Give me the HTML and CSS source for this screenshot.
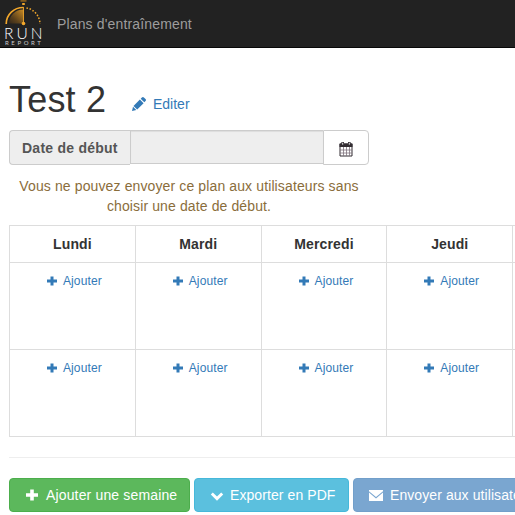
FILE: index.html
```
<!DOCTYPE html>
<html lang="fr">
<head>
<meta charset="utf-8">
<title>Plans d'entraînement</title>
<link rel="stylesheet" href="styles.css">
</head>
<body>
<svg class="defs" width="0" height="0">
  <symbol id="plus" viewBox="0 0 10 10"><path d="M3.5 0.5h3v3h3.5v3H6.5v3h-3v-3H0v-3h3.5z"/></symbol>
</svg>
<nav class="navbar">
  <a class="brand">
    <svg class="watch" width="38" height="26" viewBox="0 0 38 26">
      <defs><linearGradient id="gold" x1="0" y1="1" x2="1" y2="0"><stop offset="0" stop-color="#33271a"/><stop offset=".35" stop-color="#5b411c"/><stop offset="1" stop-color="#c88a24"/></linearGradient></defs>
      <path d="M15.500 0h6v1.800h-6z" fill="#80591d"/><path d="M17.200 3h2.600v2h-2.600z" fill="#f2a72b"/>
      <path d="M18.500 9.500A14 14 0 0 0 4 23.500H18.500z" fill="url(#gold)"/>
      <path d="M18.500 7.500A17 16.500 0 0 0 1.200 24" fill="none" stroke="#f2a72b" stroke-width="1.700"/>
      <path d="M21.500 8A16 16.500 0 0 1 35 24" fill="none" stroke="#f2a72b" stroke-width="1.500" stroke-dasharray="1.500 1.700"/>
      <path d="M18.500 7v17" stroke="#e09b2a" stroke-width="1"/>
      <circle cx="18.500" cy="23.500" r="1.800" fill="#f2a72b"/>
    </svg>
    <span class="run">RUN</span>
    <span class="report">REPORT</span>
  </a>
  <a class="nav-link">Plans d'entraînement</a>
</nav>
<main class="page">
  <div class="title">
    <h1>Test 2</h1>
    <a class="edit"><svg width="14" height="14" viewBox="0 0 14 14" fill="currentColor"><path d="M0 14l1-4.300 3.300 3.300zM1.500 8.900l6.400-6.400 3.700 3.700-6.400 6.400zM8.700 1.700l1.200-1.200q1-1 2 0l1.600 1.600q1 1 0 2l-1.200 1.200z"/></svg>Editer</a>
  </div>
  <div class="date-group">
    <label class="addon">Date de début</label>
    <div class="field"></div>
    <button class="calendar" aria-label="Calendrier"><svg width="14" height="15" viewBox="0 0 14 15"><path d="M1 2h12v12H1z" fill="#fff" stroke="#332d32"/><path d="M.5 1.500h13v3.500H.5z" fill="#332d32"/><path d="M4.500 5v9M7.500 5v9M10.500 5v9M1 8h12M1 11h12" stroke="#80757f" stroke-width=".8"/><path d="M3.700 0v3M10.300 0v3" stroke="#332d32" stroke-width="2.600"/><path d="M3.700 .7v2M10.300 .7v2" stroke="#fff" stroke-width=".9"/></svg></button>
  </div>
  <p class="warning">Vous ne pouvez envoyer ce plan aux utilisateurs sans choisir une date de début.</p>
  <table class="plan">
    <thead><tr><th>Lundi</th><th>Mardi</th><th>Mercredi</th><th>Jeudi</th><th></th></tr></thead>
    <tbody>
      <tr>
        <td><a class="add"><svg><use href="#plus"/></svg>Ajouter</a></td>
        <td><a class="add"><svg><use href="#plus"/></svg>Ajouter</a></td>
        <td><a class="add"><svg><use href="#plus"/></svg>Ajouter</a></td>
        <td><a class="add"><svg><use href="#plus"/></svg>Ajouter</a></td>
        <td></td>
      </tr>
      <tr>
        <td><a class="add"><svg><use href="#plus"/></svg>Ajouter</a></td>
        <td><a class="add"><svg><use href="#plus"/></svg>Ajouter</a></td>
        <td><a class="add"><svg><use href="#plus"/></svg>Ajouter</a></td>
        <td><a class="add"><svg><use href="#plus"/></svg>Ajouter</a></td>
        <td></td>
      </tr>
    </tbody>
  </table>
  <hr>
  <div class="actions">
    <a class="btn success"><svg width="12" height="12" viewBox="0 0 10 10"><use href="#plus" width="10" height="10"/></svg>Ajouter une semaine</a>
    <a class="btn info"><svg width="14" height="14" viewBox="0 0 14 14"><path d="M.8 6.500l2-2 4.200 4 4.200-4 2 2L7 12.700z"/></svg>Exporter en PDF</a>
    <a class="btn primary"><svg width="14" height="14" viewBox="0 0 14 14"><path d="M0 2h14v1.200L7 9 0 3.200zM0 4.600l7 5.900 7-5.900V13H0z"/></svg>Envoyer aux utilisateurs</a>
  </div>
</main>
</body>
</html>
```
FILE: styles.css
```
* { box-sizing: border-box; }
html { overflow: hidden; }
body {
  margin: 0;
  height: 515px;
  overflow: hidden;
  background: #fff;
  color: #333;
  font: 14px/20px "Liberation Sans", Arial, sans-serif;
}
.defs { position: absolute; }
.navbar {
  display: flex;
  height: 48px;
  background: #222;
  border-bottom: 1px solid #080808;
}
.brand {
  display: flex;
  flex-direction: column;
  width: 57px;
  padding-left: 5px;
  color: #fff;
}
.watch { display: block; flex: none; }
.run {
  height: 14px;
  margin-left: -1px;
  font: 300 15.5px/14px Lato, sans-serif;
  letter-spacing: 3px;
}
.report {
  height: 6px;
  font: 6px/6px Lato, sans-serif;
  letter-spacing: 2.6px;
  color: #ccc;
}
.nav-link { padding-top: 14px; color: #9d9d9d; letter-spacing: .15px; }
.page { padding: 30px 0 0 9px; }
.title { display: flex; height: 52px; }
h1 {
  width: 123px;
  margin: 1px 0 0;
  font-size: 36px;
  line-height: 42px;
  font-weight: 500;
  letter-spacing: .2px;
}
.edit {
  display: flex;
  align-items: center;
  height: 20px;
  margin-top: 16px;
  gap: 7px;
  color: #337ab7;
}
.date-group { display: flex; align-items: flex-start; width: 360px; height: 35px; }
.addon {
  width: 121px;
  height: 35px;
  padding: 7px 0 0 12px;
  border: 1px solid #ccc;
  border-right: 0;
  border-radius: 4px 0 0 4px;
  background: #eee;
  color: #555;
  font-weight: bold;
  letter-spacing: .24px;
}
.field {
  flex: 1;
  height: 34px;
  border: 1px solid #ccc;
  border-right: 0;
  background: #eee;
  box-shadow: inset 0 1px 1px rgba(0, 0, 0, .075);
}
.calendar {
  display: flex;
  align-items: center;
  justify-content: center;
  width: 46px;
  height: 35px;
  padding: 3px 0 0;
  border: 1px solid #ccc;
  border-radius: 0 4px 4px 0;
  background: #fff;
}
.warning {
  width: 360px;
  margin: 11px 0 9px;
  color: #8a6d3b;
  text-align: center;
  letter-spacing: .12px;
}
.plan {
  width: 630px;
  table-layout: fixed;
  border-collapse: collapse;
}
.plan th, .plan td { padding: 8px; border: 1px solid #ddd; text-align: center; }
.plan th { height: 37px; letter-spacing: .12px; }
.plan td { height: 87px; vertical-align: top; }
.add {
  display: flex;
  align-items: center;
  justify-content: center;
  gap: 6px;
  height: 20px;
  padding-left: 4px;
  font-size: 12px;
  color: #337ab7;
  letter-spacing: .12px;
}
.add svg { width: 10px; height: 10px; fill: currentColor; }
hr { margin: 20px 0; border: 0; border-top: 1px solid #eee; }
.actions { display: flex; gap: 4px; width: 700px; }
.btn {
  display: flex;
  align-items: center;
  height: 34px;
  padding-left: 15px;
  gap: 6px;
  border: 1px solid;
  border-radius: 4px;
  color: #fff;
  white-space: nowrap;
  letter-spacing: .08px;
}
.btn svg { fill: currentColor; }
.success { width: 181px; gap: 8px; padding-left: 16px; background: #5cb85c; border-color: #4cae4c; letter-spacing: .15px; }
.info { width: 155px; background: #5bc0de; border-color: #46b8da; }
.primary { width: 200px; gap: 7px; background: #7aa6d0; border-color: #729fca; }
```
